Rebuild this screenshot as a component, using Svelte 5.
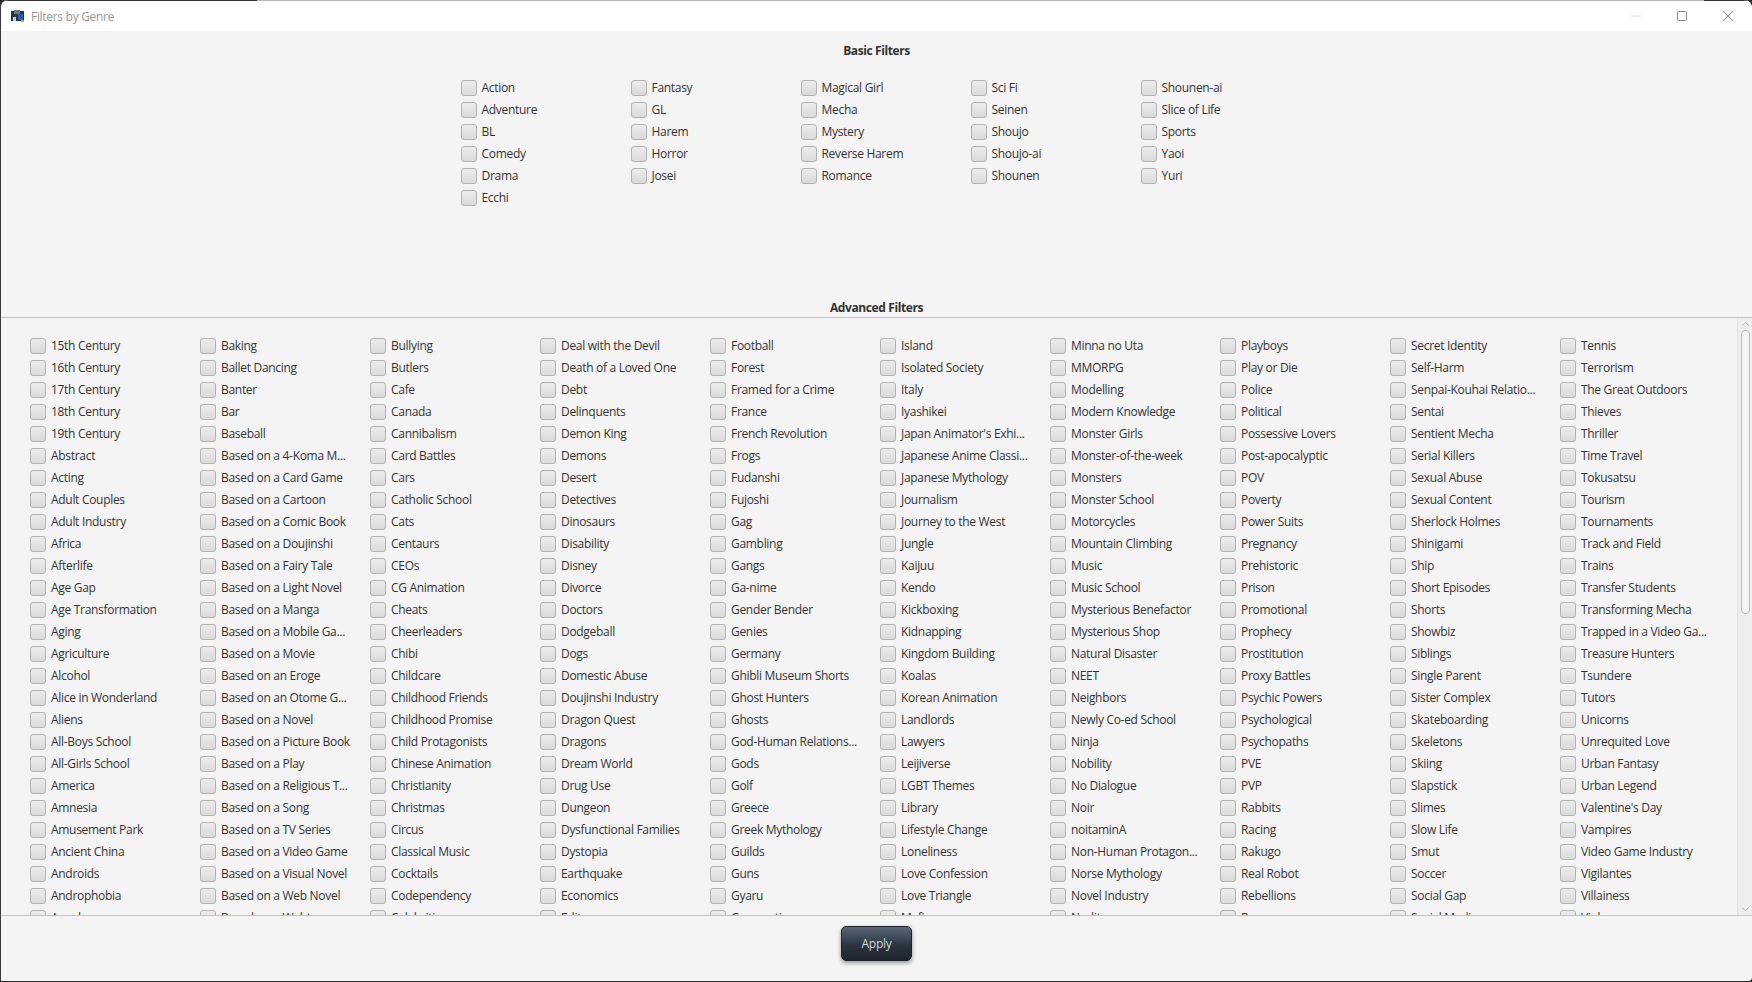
<script>
	// Genre filter dialog: a fixed block of basic filters above a clipped list of advanced ones

	const basicColumns = [
		['Action', 'Adventure', 'BL', 'Comedy', 'Drama', 'Ecchi'],
		['Fantasy', 'GL', 'Harem', 'Horror', 'Josei'],
		['Magical Girl', 'Mecha', 'Mystery', 'Reverse Harem', 'Romance'],
		['Sci Fi', 'Seinen', 'Shoujo', 'Shoujo-ai', 'Shounen'],
		['Shounen-ai', 'Slice of Life', 'Sports', 'Yaoi', 'Yuri']
	];

	const advancedColumns = [
		['15th Century', '16th Century', '17th Century', '18th Century', '19th Century', 'Abstract', 'Acting', 'Adult Couples', 'Adult Industry', 'Africa', 'Afterlife', 'Age Gap', 'Age Transformation', 'Aging', 'Agriculture', 'Alcohol', 'Alice in Wonderland', 'Aliens', 'All-Boys School', 'All-Girls School', 'America', 'Amnesia', 'Amusement Park', 'Ancient China', 'Androids', 'Androphobia', 'Angels'],
		['Baking', 'Ballet Dancing', 'Banter', 'Bar', 'Baseball', 'Based on a 4-Koma M...', 'Based on a Card Game', 'Based on a Cartoon', 'Based on a Comic Book', 'Based on a Doujinshi', 'Based on a Fairy Tale', 'Based on a Light Novel', 'Based on a Manga', 'Based on a Mobile Ga...', 'Based on a Movie', 'Based on an Eroge', 'Based on an Otome G...', 'Based on a Novel', 'Based on a Picture Book', 'Based on a Play', 'Based on a Religious T...', 'Based on a Song', 'Based on a TV Series', 'Based on a Video Game', 'Based on a Visual Novel', 'Based on a Web Novel', 'Based on a Webtoon'],
		['Bullying', 'Butlers', 'Cafe', 'Canada', 'Cannibalism', 'Card Battles', 'Cars', 'Catholic School', 'Cats', 'Centaurs', 'CEOs', 'CG Animation', 'Cheats', 'Cheerleaders', 'Chibi', 'Childcare', 'Childhood Friends', 'Childhood Promise', 'Child Protagonists', 'Chinese Animation', 'Christianity', 'Christmas', 'Circus', 'Classical Music', 'Cocktails', 'Codependency', 'Celebrities'],
		['Deal with the Devil', 'Death of a Loved One', 'Debt', 'Delinquents', 'Demon King', 'Demons', 'Desert', 'Detectives', 'Dinosaurs', 'Disability', 'Disney', 'Divorce', 'Doctors', 'Dodgeball', 'Dogs', 'Domestic Abuse', 'Doujinshi Industry', 'Dragon Quest', 'Dragons', 'Dream World', 'Drug Use', 'Dungeon', 'Dysfunctional Families', 'Dystopia', 'Earthquake', 'Economics', 'Edits'],
		['Football', 'Forest', 'Framed for a Crime', 'France', 'French Revolution', 'Frogs', 'Fudanshi', 'Fujoshi', 'Gag', 'Gambling', 'Gangs', 'Ga-nime', 'Gender Bender', 'Genies', 'Germany', 'Ghibli Museum Shorts', 'Ghost Hunters', 'Ghosts', 'God-Human Relations...', 'Gods', 'Golf', 'Greece', 'Greek Mythology', 'Guilds', 'Guns', 'Gyaru', 'Gymnastics'],
		['Island', 'Isolated Society', 'Italy', 'Iyashikei', "Japan Animator's Exhi...", 'Japanese Anime Classi...', 'Japanese Mythology', 'Journalism', 'Journey to the West', 'Jungle', 'Kaijuu', 'Kendo', 'Kickboxing', 'Kidnapping', 'Kingdom Building', 'Koalas', 'Korean Animation', 'Landlords', 'Lawyers', 'Leijiverse', 'LGBT Themes', 'Library', 'Lifestyle Change', 'Loneliness', 'Love Confession', 'Love Triangle', 'Mafia'],
		['Minna no Uta', 'MMORPG', 'Modelling', 'Modern Knowledge', 'Monster Girls', 'Monster-of-the-week', 'Monsters', 'Monster School', 'Motorcycles', 'Mountain Climbing', 'Music', 'Music School', 'Mysterious Benefactor', 'Mysterious Shop', 'Natural Disaster', 'NEET', 'Neighbors', 'Newly Co-ed School', 'Ninja', 'Nobility', 'No Dialogue', 'Noir', 'noitaminA', 'Non-Human Protagon...', 'Norse Mythology', 'Novel Industry', 'Nudity'],
		['Playboys', 'Play or Die', 'Police', 'Political', 'Possessive Lovers', 'Post-apocalyptic', 'POV', 'Poverty', 'Power Suits', 'Pregnancy', 'Prehistoric', 'Prison', 'Promotional', 'Prophecy', 'Prostitution', 'Proxy Battles', 'Psychic Powers', 'Psychological', 'Psychopaths', 'PVE', 'PVP', 'Rabbits', 'Racing', 'Rakugo', 'Real Robot', 'Rebellions', 'Revenge'],
		['Secret Identity', 'Self-Harm', 'Senpai-Kouhai Relatio...', 'Sentai', 'Sentient Mecha', 'Serial Killers', 'Sexual Abuse', 'Sexual Content', 'Sherlock Holmes', 'Shinigami', 'Ship', 'Short Episodes', 'Shorts', 'Showbiz', 'Siblings', 'Single Parent', 'Sister Complex', 'Skateboarding', 'Skeletons', 'Skiing', 'Slapstick', 'Slimes', 'Slow Life', 'Smut', 'Soccer', 'Social Gap', 'Social Media'],
		['Tennis', 'Terrorism', 'The Great Outdoors', 'Thieves', 'Thriller', 'Time Travel', 'Tokusatsu', 'Tourism', 'Tournaments', 'Track and Field', 'Trains', 'Transfer Students', 'Transforming Mecha', 'Trapped in a Video Ga...', 'Treasure Hunters', 'Tsundere', 'Tutors', 'Unicorns', 'Unrequited Love', 'Urban Fantasy', 'Urban Legend', "Valentine's Day", 'Vampires', 'Video Game Industry', 'Vigilantes', 'Villainess', 'Violence']
	];
</script>

<div class="window">
	<header class="titlebar">
		<svg class="app-icon" viewBox="0 0 14 14" width="14" height="14">
			<rect x="0" y="2" width="13" height="10" fill="#2b3442" />
			<rect x="3" y="1" width="6" height="4" fill="#6d7785" />
			<rect x="7" y="5" width="5" height="6" fill="#1d63b5" />
			<rect x="2" y="8" width="3" height="4" fill="#c9ced6" />
			<rect x="10" y="11" width="3" height="2" fill="#c8a86a" />
		</svg>
		<span class="title">Filters by Genre</span>
		<div class="window-controls">
			<svg width="12" height="12" viewBox="0 0 12 12"><path d="M1 6h10" stroke="#dcdcdc" /></svg>
			<svg width="12" height="12" viewBox="0 0 12 12"><rect x="1.5" y="1.5" width="9" height="9" rx="1" fill="none" stroke="#8c8c8c" /></svg>
			<svg width="12" height="12" viewBox="0 0 12 12"><path d="M1 1l10 10M11 1L1 11" stroke="#8c8c8c" fill="none" /></svg>
		</div>
	</header>

	<section class="basic">
		<h2>Basic Filters</h2>
		<div class="basic-grid">
			{#each basicColumns as column}
				<div class="column">
					{#each column as genre}
						<label class="check"><span class="box"></span><span class="text">{genre}</span></label>
					{/each}
				</div>
			{/each}
		</div>
	</section>

	<h2 class="advanced-title">Advanced Filters</h2>
	<section class="advanced">
		<div class="advanced-grid">
			{#each advancedColumns as column}
				<div class="column">
					{#each column as genre}
						<label class="check"><span class="box"></span><span class="text">{genre}</span></label>
					{/each}
				</div>
			{/each}
		</div>
		<div class="scrollbar">
			<svg width="9" height="6" viewBox="0 0 9 6"><path d="M1 4.5l3.5-3 3.5 3" fill="none" stroke="#b4b4b4" /></svg>
			<div class="track"><div class="thumb"></div></div>
			<svg width="9" height="6" viewBox="0 0 9 6"><path d="M1 1.5l3.5 3 3.5-3" fill="none" stroke="#b4b4b4" /></svg>
		</div>
	</section>

	<footer class="footer">
		<button class="apply">Apply</button>
	</footer>
</div>

<style>
	:global(body) {
		background: #2b2b2f;
	}

	.window {
		height: 981px;
		width: 1752px;
		box-sizing: border-box;
		display: flex;
		flex-direction: column;
		background: #f4f4f4;
		border-left: 1px solid #3a3a3a;
		border-radius: 8px 8px 4px 0;
		overflow: hidden;
		font-family: 'Open Sans', 'Noto Sans', sans-serif;
		font-size: 12px;
		letter-spacing: -0.3px;
		color: #333;
	}

	.titlebar {
		flex: none;
		height: 31px;
		display: flex;
		align-items: center;
		padding: 1px 0 0 10px;
		box-sizing: border-box;
		background: linear-gradient(to right, #333 256px, #b8b8b8 256px, #b8b8b8 1703px, #333 1703px) top / 100% 1px no-repeat, #fff;
	}

	.app-icon {
		margin-right: 6px;
	}

	.title {
		color: #999;
	}

	.window-controls {
		margin-left: auto;
		margin-right: 18px;
		display: flex;
		gap: 34px;
	}

	.basic {
		flex: none;
		height: 272px;
		display: flex;
		flex-direction: column;
		align-items: center;
	}

	h2 {
		margin: 0;
		font-size: 12px;
		font-weight: 700;
		line-height: 16px;
		letter-spacing: -0.4px;
		text-align: center;
		color: #333;
	}

	.basic h2 {
		margin-top: 12px;
	}

	.basic-grid {
		display: flex;
		margin: 18px 0 0 18px;
		width: 850px;
	}

	.basic-grid .column {
		width: 170px;
	}

	.advanced-title {
		flex: none;
		height: 14px;
		line-height: 10px;
	}

	.advanced {
		flex: none;
		height: 599px;
		display: flex;
		border-top: 1px solid #c4c4c4;
		border-bottom: 1px solid #c4c4c4;
		box-sizing: border-box;
		overflow: hidden;
	}

	.advanced-grid {
		flex: 1;
		display: flex;
		padding: 17px 0 0 29px;
		overflow: hidden;
	}

	.advanced-grid .column {
		flex: none;
		width: 170px;
	}

	.check {
		display: flex;
		align-items: center;
		height: 22px;
		white-space: nowrap;
	}

	.box {
		flex: none;
		width: 16px;
		height: 16px;
		box-sizing: border-box;
		border: 1px solid #b2b2b2;
		border-radius: 3px;
		background: linear-gradient(#ececec, #dadada);
		margin-right: 5px;
	}

	.text {
		line-height: 16px;
	}

	.scrollbar {
		flex: none;
		width: 15px;
		display: flex;
		flex-direction: column;
		align-items: center;
		background: #eeeeee;
		border-left: 1px solid #e2e2e2;
		box-sizing: border-box;
		padding: 3px 0;
		gap: 3px;
	}

	.track {
		flex: 1;
		width: 100%;
		display: flex;
		justify-content: center;
	}

	.thumb {
		width: 9px;
		height: 284px;
		box-sizing: border-box;
		border: 1px solid #bdbdbd;
		border-radius: 4px;
		background: #f3f3f3;
	}

	.footer {
		flex: 1;
		display: flex;
		align-items: flex-start;
		justify-content: center;
		padding-top: 10px;
	}

	.apply {
		width: 71px;
		height: 35px;
		border: 1px solid #1d2228;
		border-radius: 5px;
		background: linear-gradient(#5a6878, #2c3540 55%, #1d2329);
		color: #d4d8dc;
		font-family: inherit;
		font-size: 12px;
		letter-spacing: -0.3px;
		box-shadow: 0 2px 4px rgba(0, 0, 0, 0.4);
	}
</style>
